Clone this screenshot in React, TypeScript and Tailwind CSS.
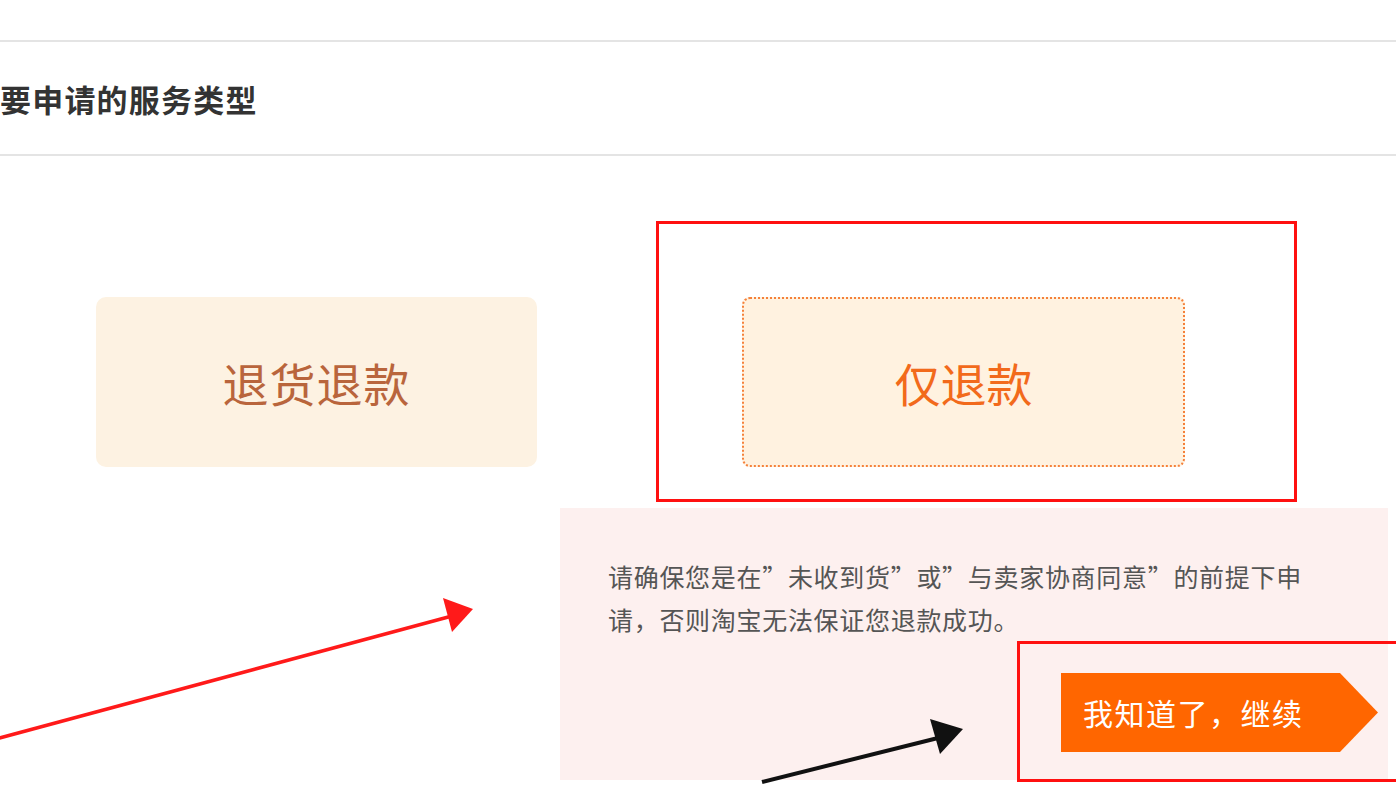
export default function App() {
  return (
    <div className="relative w-[1396px] h-[800px] overflow-hidden bg-white font-['Noto_Sans_CJK_SC','Noto_Sans',sans-serif]">
      {/* top strip */}
      <div className="h-[42px] border-b-2 border-[#e4e4e4]" />

      {/* section title */}
      <div className="h-[114px] flex items-center border-b-2 border-[#e4e4e4]">
        <h2 className="text-[31px] leading-none font-bold text-[#333] tracking-[1.2px]">要申请的服务类型</h2>
      </div>

      {/* service options */}
      <div className="flex items-start">
        <button className="ml-[96px] mt-[141px] w-[441px] h-[170px] rounded-[10px] bg-[#fdf2e2] flex items-center justify-center text-[46px] tracking-[1px] text-[#b9653c]">
          退货退款
        </button>

        <div className="ml-[119px] mt-[65px] w-[641px] h-[281px] border-[3px] border-[#ff1010] pl-[83px] pt-[73px]">
          <button className="w-[443px] h-[170px] rounded-[8px] border-2 border-dotted border-[#f5813a] bg-[#fff2e0] flex items-center justify-center text-[46px] text-[#f26a1b]">
            仅退款
          </button>
        </div>
      </div>

      {/* notice */}
      <div className="ml-[560px] mt-[6px] w-[828px] h-[272px] bg-[#fdf0ef]">
        <p className="pl-[48px] pt-[47px] text-[25px] leading-[43px] tracking-[0.7px] text-[#555] whitespace-nowrap">
          请确保您是在”未收到货”或”与卖家协商同意”的前提下申
          <br />
          请，否则淘宝无法保证您退款成功。
        </p>
        <div className="ml-[457px] w-[400px] h-[141px] border-[3px] border-[#ff1010] pl-[41px] pt-[29px]">
          <button className="w-[317px] h-[79px] bg-[#ff6600] text-white text-[30px] tracking-[1.5px] pl-[22px] text-left [clip-path:polygon(0_0,88%_0,100%_50%,88%_100%,0_100%)]">
            我知道了，继续
          </button>
        </div>
      </div>

      {/* annotation arrows */}
      <svg className="absolute inset-0 pointer-events-none" width="1396" height="800" viewBox="0 0 1396 800">
        <line x1="-4" y1="739" x2="452" y2="616" stroke="#ff1a1a" strokeWidth="3.5" />
        <polygon points="443,598 473,609 452,632" fill="#ff1a1a" />
        <line x1="762" y1="782" x2="942" y2="737" stroke="#111" strokeWidth="4" />
        <polygon points="930,719 963,729 940,754" fill="#111" />
      </svg>
    </div>
  );
}
